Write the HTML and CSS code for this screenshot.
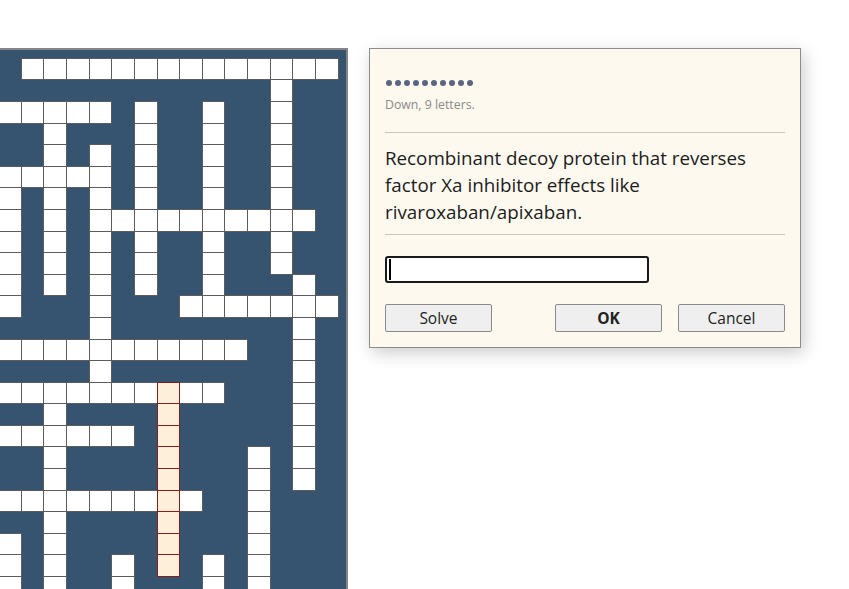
FILE: index.html
```html
<!DOCTYPE html>
<html>
<head>
<meta charset="utf-8">
<title>Crossword</title>
<link rel="stylesheet" href="styles.css">
</head>
<body>
<div class="page">
  <div class="board">
    <div class="grid">
      <i></i><i class="w"></i><i class="w"></i><i class="w"></i><i class="w"></i><i class="w"></i><i class="w"></i><i class="w"></i><i class="w"></i><i class="w"></i><i class="w"></i><i class="w"></i><i class="w"></i><i class="w"></i><i class="w"></i>
      <i></i><i></i><i></i><i></i><i></i><i></i><i></i><i></i><i></i><i></i><i></i><i></i><i class="w"></i><i></i><i></i>
      <i class="w"></i><i class="w"></i><i class="w"></i><i class="w"></i><i class="w"></i><i></i><i class="w"></i><i></i><i></i><i class="w"></i><i></i><i></i><i class="w"></i><i></i><i></i>
      <i></i><i></i><i class="w"></i><i></i><i></i><i></i><i class="w"></i><i></i><i></i><i class="w"></i><i></i><i></i><i class="w"></i><i></i><i></i>
      <i></i><i></i><i class="w"></i><i></i><i class="w"></i><i></i><i class="w"></i><i></i><i></i><i class="w"></i><i></i><i></i><i class="w"></i><i></i><i></i>
      <i class="w"></i><i class="w"></i><i class="w"></i><i class="w"></i><i class="w"></i><i></i><i class="w"></i><i></i><i></i><i class="w"></i><i></i><i></i><i class="w"></i><i></i><i></i>
      <i class="w"></i><i></i><i class="w"></i><i></i><i class="w"></i><i></i><i class="w"></i><i></i><i></i><i class="w"></i><i></i><i></i><i class="w"></i><i></i><i></i>
      <i class="w"></i><i></i><i class="w"></i><i></i><i class="w"></i><i class="w"></i><i class="w"></i><i class="w"></i><i class="w"></i><i class="w"></i><i class="w"></i><i class="w"></i><i class="w"></i><i class="w"></i><i></i>
      <i class="w"></i><i></i><i class="w"></i><i></i><i class="w"></i><i></i><i class="w"></i><i></i><i></i><i class="w"></i><i></i><i></i><i class="w"></i><i></i><i></i>
      <i class="w"></i><i></i><i class="w"></i><i></i><i class="w"></i><i></i><i class="w"></i><i></i><i></i><i class="w"></i><i></i><i></i><i class="w"></i><i></i><i></i>
      <i class="w"></i><i></i><i class="w"></i><i></i><i class="w"></i><i></i><i class="w"></i><i></i><i></i><i class="w"></i><i></i><i></i><i></i><i class="w"></i><i></i>
      <i class="w"></i><i></i><i></i><i></i><i class="w"></i><i></i><i></i><i></i><i class="w"></i><i class="w"></i><i class="w"></i><i class="w"></i><i class="w"></i><i class="w"></i><i class="w"></i>
      <i></i><i></i><i></i><i></i><i class="w"></i><i></i><i></i><i></i><i></i><i></i><i></i><i></i><i></i><i class="w"></i><i></i>
      <i class="w"></i><i class="w"></i><i class="w"></i><i class="w"></i><i class="w"></i><i class="w"></i><i class="w"></i><i class="w"></i><i class="w"></i><i class="w"></i><i class="w"></i><i></i><i></i><i class="w"></i><i></i>
      <i></i><i></i><i></i><i></i><i class="w"></i><i></i><i></i><i></i><i></i><i></i><i></i><i></i><i></i><i class="w"></i><i></i>
      <i class="w"></i><i class="w"></i><i class="w"></i><i class="w"></i><i class="w"></i><i class="w"></i><i class="w"></i><i class="h"></i><i class="w"></i><i class="w"></i><i></i><i></i><i></i><i class="w"></i><i></i>
      <i></i><i></i><i class="w"></i><i></i><i></i><i></i><i></i><i class="h"></i><i></i><i></i><i></i><i></i><i></i><i class="w"></i><i></i>
      <i class="w"></i><i class="w"></i><i class="w"></i><i class="w"></i><i class="w"></i><i class="w"></i><i></i><i class="h"></i><i></i><i></i><i></i><i></i><i></i><i class="w"></i><i></i>
      <i></i><i></i><i class="w"></i><i></i><i></i><i></i><i></i><i class="h"></i><i></i><i></i><i></i><i class="w"></i><i></i><i class="w"></i><i></i>
      <i></i><i></i><i class="w"></i><i></i><i></i><i></i><i></i><i class="h"></i><i></i><i></i><i></i><i class="w"></i><i></i><i class="w"></i><i></i>
      <i class="w"></i><i class="w"></i><i class="w"></i><i class="w"></i><i class="w"></i><i class="w"></i><i class="w"></i><i class="h"></i><i class="w"></i><i></i><i></i><i class="w"></i><i></i><i></i><i></i>
      <i></i><i></i><i class="w"></i><i></i><i></i><i></i><i></i><i class="h"></i><i></i><i></i><i></i><i class="w"></i><i></i><i></i><i></i>
      <i class="w"></i><i></i><i class="w"></i><i></i><i></i><i></i><i></i><i class="h"></i><i></i><i></i><i></i><i class="w"></i><i></i><i></i><i></i>
      <i class="w"></i><i></i><i class="w"></i><i></i><i></i><i class="w"></i><i></i><i class="h"></i><i></i><i class="w"></i><i></i><i class="w"></i><i></i><i></i><i></i>
      <i class="w"></i><i></i><i class="w"></i><i></i><i></i><i class="w"></i><i></i><i></i><i></i><i class="w"></i><i></i><i class="w"></i><i></i><i></i><i></i>
    </div>
  </div>

  <div class="dialog">
    <div class="dots"><span></span><span></span><span></span><span></span><span></span><span></span><span></span><span></span><span></span><span></span></div>
    <div class="meta">Down, 9 letters.</div>
    <hr class="sep">
    <p class="clue">Recombinant decoy protein that reverses factor Xa inhibitor effects like rivaroxaban/apixaban.</p>
    <hr class="sep sep-low">
    <div class="answer"><span class="caret"></span></div>
    <div class="buttons">
      <button class="btn">Solve</button>
      <div class="btn-group">
        <button class="btn btn-ok">OK</button>
        <button class="btn">Cancel</button>
      </div>
    </div>
  </div>
</div>
</body>
</html>
```

FILE: styles.css
```css
html, body {
  margin: 0;
  padding: 0;
  background: #ffffff;
  overflow: hidden;
}

body {
  font-family: "Open Sans", "Noto Sans", sans-serif;
  color: #1c1c1c;
}

.page {
  display: flex;
  align-items: flex-start;
  gap: 20.5px;
  padding-top: 48px;
  height: 589px;
  box-sizing: border-box;
}

/* ---------- crossword board ---------- */
.board {
  flex: none;
  margin-left: -11.7px;
  border: 2px solid #858585;
  background: #36546f;
  padding: 8.3px 8.4px;
}

.grid {
  display: grid;
  grid-template-columns: repeat(15, 22.64px);
  grid-auto-rows: 21.6px;
}

.grid i {
  display: block;
}

.grid .w {
  background: #ffffff;
  border: 1px solid #5c5c5c;
  margin: -0.5px;
}

.grid .h {
  background: #fdefd9;
  border: 1px solid #8b1c1c;
  margin: -0.5px;
  position: relative;
  z-index: 1;
}

/* ---------- clue dialog ---------- */
.dialog {
  flex: none;
  width: 432px;
  box-sizing: border-box;
  border: 1px solid #8c8c8c;
  background: #fdf9ef;
  padding: 31px 15px 15px;
  box-shadow: 3px 5px 16px rgba(0, 0, 0, 0.2);
}

.dots {
  display: flex;
  gap: 3px;
  height: 6px;
  padding-left: 1px;
}

.dots span {
  width: 6px;
  height: 6px;
  border-radius: 50%;
  background: #5b6580;
}

.meta {
  margin-top: 11px;
  font-size: 12.3px;
  line-height: 16px;
  color: #8a8a8a;
}

.sep {
  margin: 19px 0 0;
  border: 0;
  height: 1px;
  background: #c9c5bd;
}

.sep-low {
  margin-top: 8.5px;
}

.clue {
  margin: 11.5px 0 0;
  font-size: 18.8px;
  line-height: 27px;
  color: #1c1c1c;
}

.answer {
  margin-top: 21px;
  width: 264px;
  height: 27px;
  box-sizing: border-box;
  border: 2px solid #1a1a1a;
  border-radius: 3px;
  background: #ffffff;
  display: flex;
  align-items: center;
  padding-left: 2px;
}

.caret {
  width: 2px;
  height: 21px;
  background: #000000;
}

.buttons {
  margin-top: 20.5px;
  display: flex;
  justify-content: space-between;
}

.btn-group {
  display: flex;
  gap: 16px;
}

.btn {
  width: 107px;
  height: 28.5px;
  box-sizing: border-box;
  border: 1px solid #8a8a8a;
  border-radius: 2px;
  background: #efefef;
  font-family: "Open Sans", "Noto Sans", sans-serif;
  font-size: 15.5px;
  color: #222222;
  padding: 0;
}

.btn-ok {
  font-weight: 700;
}
```
